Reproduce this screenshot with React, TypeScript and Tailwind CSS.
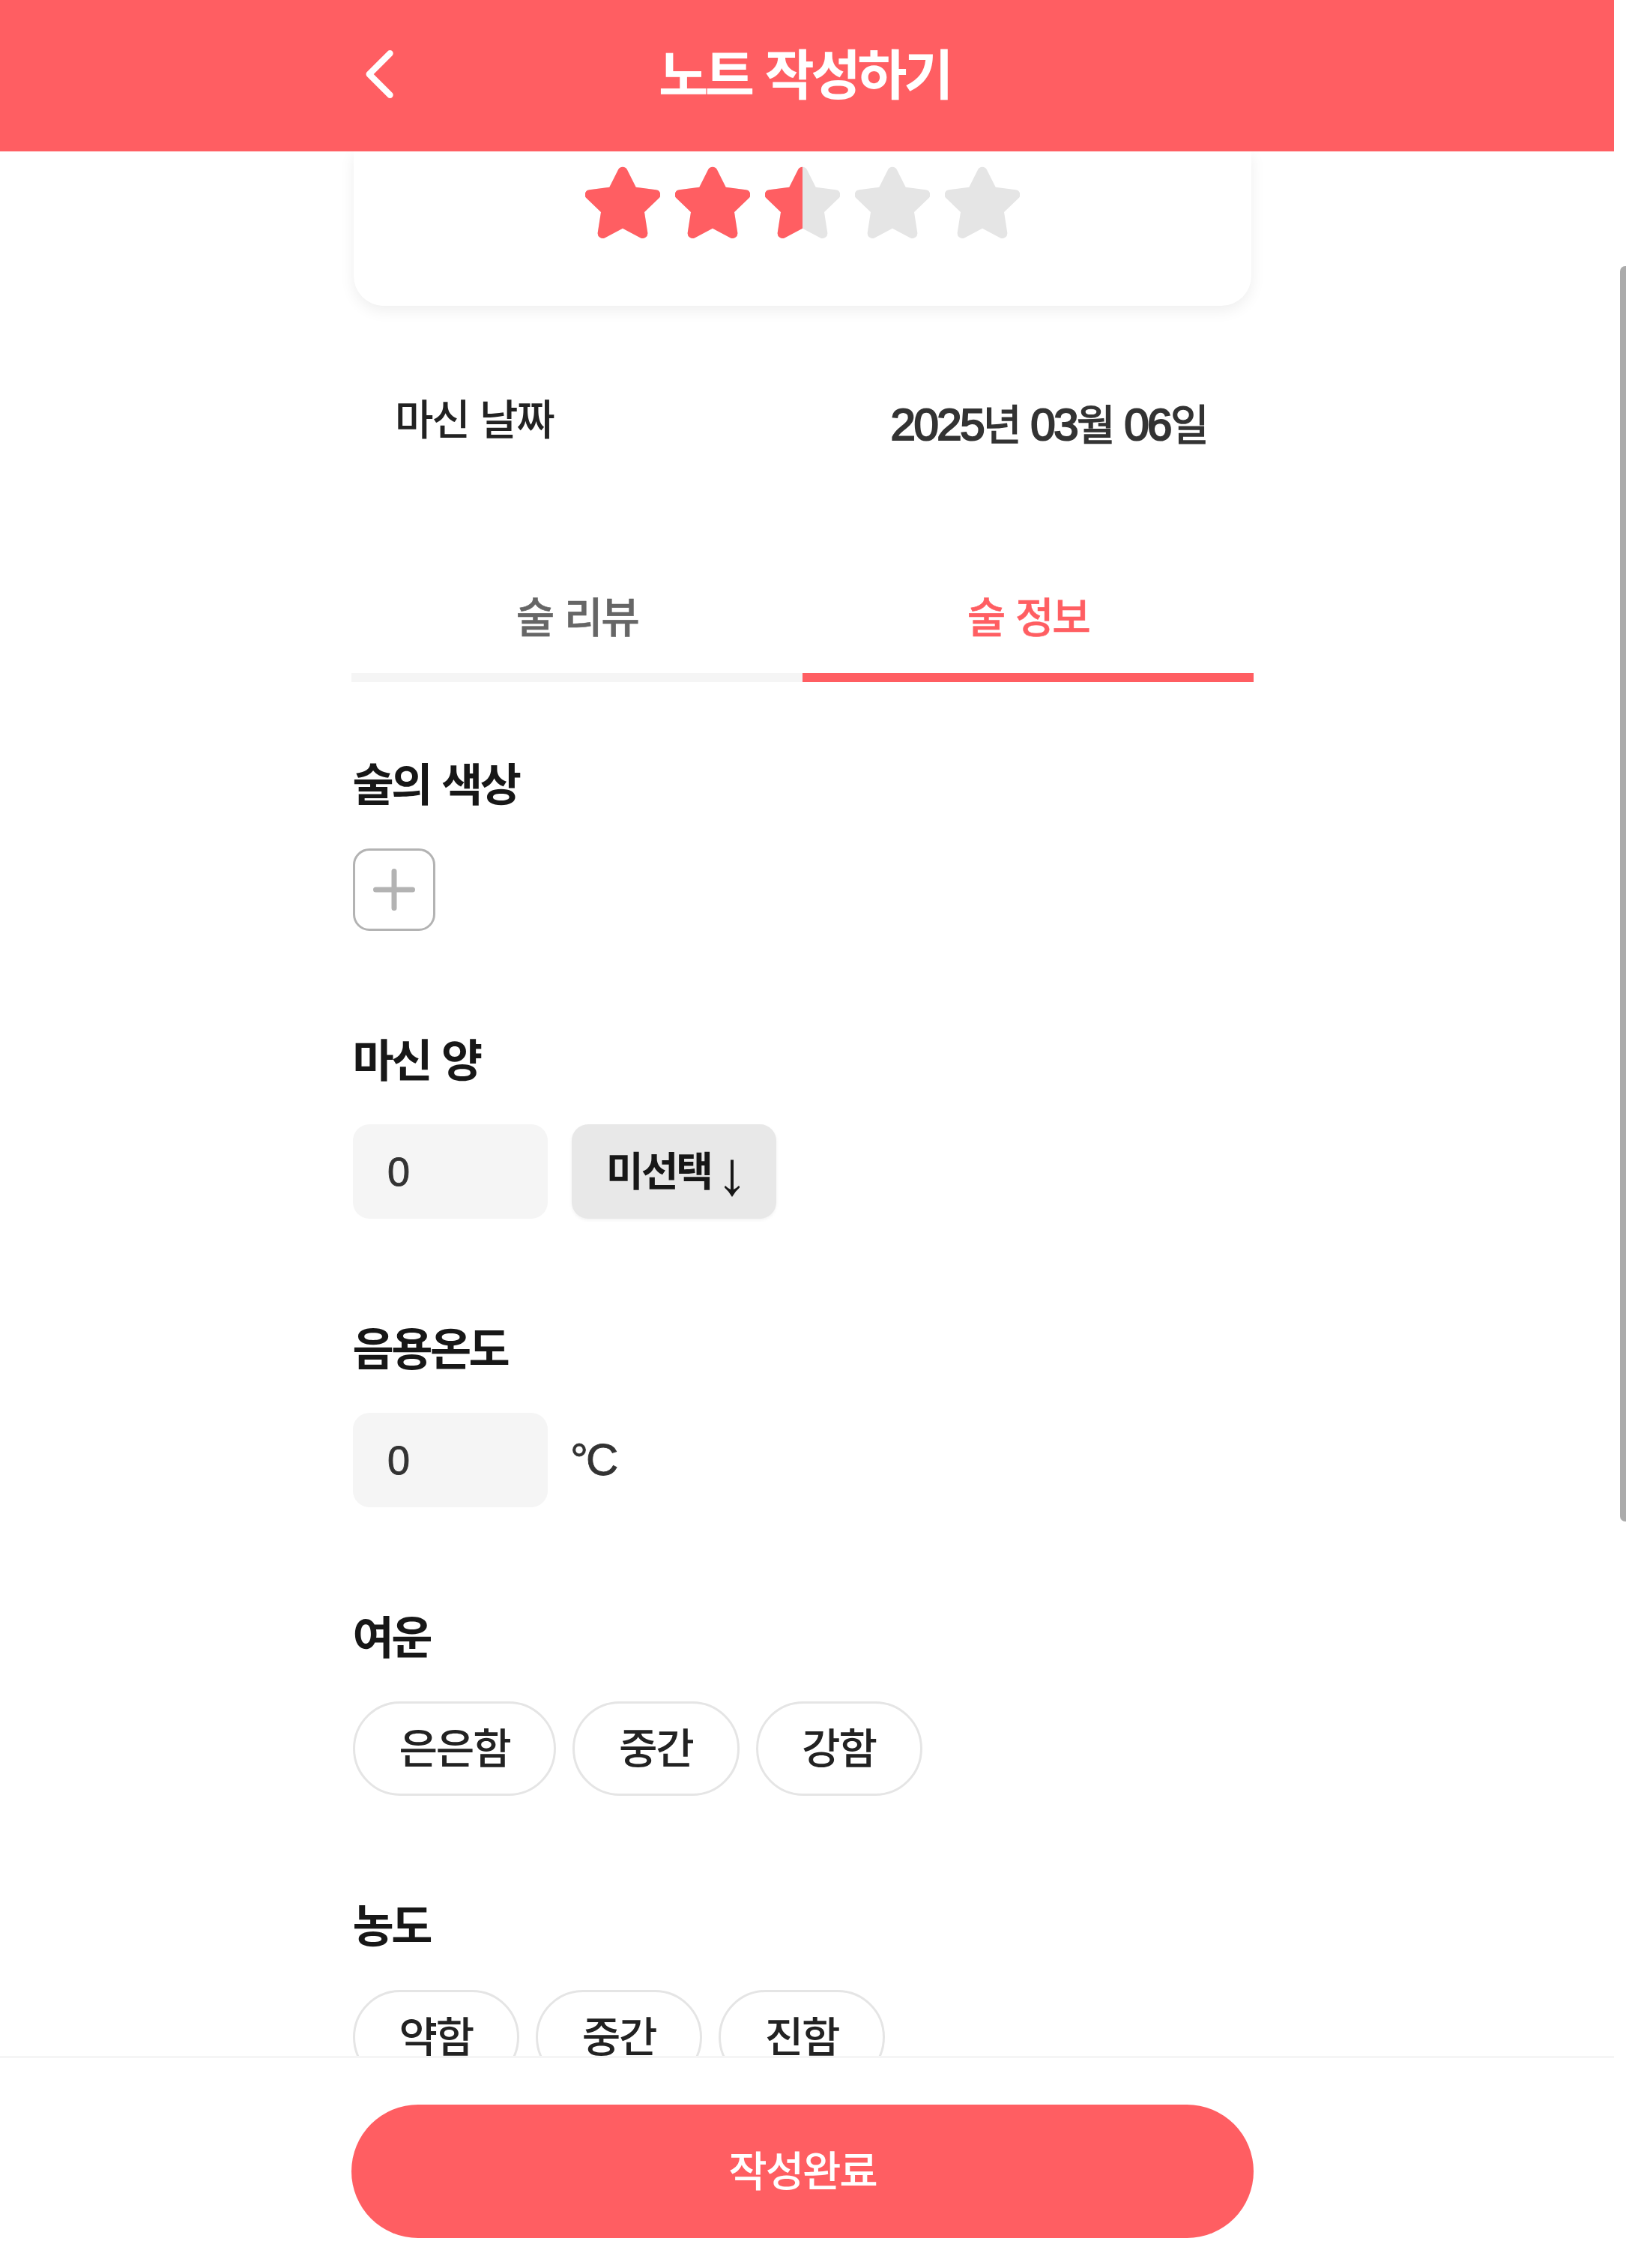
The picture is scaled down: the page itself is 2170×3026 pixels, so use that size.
import React, { useState } from "react";

const STAR_PATH =
  "M44 4.500A6.700 6.700 0 0 1 56 4.500L67.700 27.700L94.500 31.200A6.500 6.500 0 0 1 98 42.700L79 61L83.300 88.500A6.700 6.700 0 0 1 73.500 95.200L50 82.700L26.500 95.200A6.700 6.700 0 0 1 16.700 88.500L21 61L2 42.700A6.500 6.500 0 0 1 5.500 31.200L32.300 27.700Z";

type StarProps = {
  fill: number;
  id: number;
};

const Star: React.FC<StarProps> = ({ fill, id }) => (
  <svg width="100" height="97" viewBox="0 0 100 97">
    <clipPath id={`star-${id}`}>
      <rect x="0" y="0" width={fill * 100} height="97" />
    </clipPath>
    <path d={STAR_PATH} fill="#e5e5e5" />
    <path d={STAR_PATH} fill="#ff5e62" clipPath={`url(#star-${id})`} />
  </svg>
);

const SectionTitle: React.FC<{ children: React.ReactNode }> = ({ children }) => (
  <h2 className="h-[72px] pl-[1.5px] text-[60px] leading-[66px] font-bold tracking-[-3.5px] [word-spacing:5px] text-[#171717]">
    {children}
  </h2>
);

type NumberFieldProps = {
  value: string;
  onChange: (value: string) => void;
};

const NumberField: React.FC<NumberFieldProps> = ({ value, onChange }) => (
  <input
    value={value}
    onChange={(e) => onChange(e.target.value)}
    className="h-[126px] w-[260px] rounded-[22px] bg-[#f5f5f5] px-[46px] font-['Liberation_Sans',sans-serif] text-[54px] text-[#333] [-webkit-text-stroke:0.9px_#333]"
  />
);

type ChipGroupProps = {
  options: string[];
  value: string;
  onChange: (value: string) => void;
};

const ChipGroup: React.FC<ChipGroupProps> = ({ options, value, onChange }) => (
  <div className="ml-0.5 flex gap-[22px]">
    {options.map((option) => (
      <button
        key={option}
        onClick={() => onChange(option)}
        className={
          "h-[126px] rounded-full border-[3px] pr-[59px] pb-2 pl-[58.5px] text-[56px] leading-[80px] font-medium tracking-[-2.2px] whitespace-nowrap " +
          (value === option ? "border-[#ff5e62] text-[#ff5e62]" : "border-[#e5e5e5] text-[#222]")
        }
      >
        {option}
      </button>
    ))}
  </div>
);

const App: React.FC = () => {
  const [tab, setTab] = useState("info");
  const [rating] = useState(2.5);
  const [amount, setAmount] = useState("0");
  const [temperature, setTemperature] = useState("0");
  const [aftertaste, setAftertaste] = useState("");
  const [density, setDensity] = useState("");

  const tabs = [
    { id: "review", label: "술 리뷰" },
    { id: "info", label: "술 정보" },
  ];

  return (
    <div className="relative flex h-[3026px] w-[2170px] flex-col overflow-hidden bg-white font-['Noto_Sans_CJK_KR',sans-serif]">
      <header className="z-10 h-[202px] w-[2154px] shrink-0 bg-[#ff5e62]">
        <div className="ml-[469px] grid h-[198px] w-[1204px] grid-cols-[1fr_auto_1fr] items-center text-white">
          <button className="ml-[19px] w-[38px]">
            <svg width="38" height="66" viewBox="0 0 38 66" fill="none" stroke="currentColor" strokeWidth="8.4" strokeLinecap="round" strokeLinejoin="round">
              <path d="M32.500 5.200L4.700 33L32.500 60.800" />
            </svg>
          </button>
          <h1 className="pb-2 pl-[5px] text-[72px] leading-[96px] font-bold tracking-[-4.4px] [word-spacing:6px]">노트 작성하기</h1>
        </div>
      </header>

      <main className="ml-[469px] h-[2541px] w-[1204px] shrink-0">
        <div className="mx-[3px] flex h-[206px] justify-center gap-[20px] rounded-b-[40px] bg-white pt-5 shadow-[0_6px_20px_rgba(0,0,0,0.07)]">
          {[0, 1, 2, 3, 4].map((i) => (
            <Star key={i} id={i} fill={Math.max(0, Math.min(1, rating - i))} />
          ))}
        </div>

        <div className="mt-[100px] flex h-[112px] justify-between px-[60px]">
          <span className="-ml-[2px] text-[56px] leading-[96px] font-medium tracking-[-2.2px] [word-spacing:4px] text-[#222]">마신 날짜</span>
          <span className="mr-[2px] pt-[11px] font-['Liberation_Sans','Noto_Sans_CJK_KR',sans-serif] text-[60px] leading-[96px] tracking-[-2.5px] text-[#333] [-webkit-text-stroke:2.2px_#333]">
            2025<span className="text-[56px] [-webkit-text-stroke:1.5px_#333]">년</span> 03
            <span className="text-[56px] [-webkit-text-stroke:1.5px_#333]">월</span> 06
            <span className="text-[56px] [-webkit-text-stroke:1.5px_#333]">일</span>
          </span>
        </div>

        <div className="mt-[132px] flex">
          {tabs.map((item) => (
            <button
              key={item.id}
              onClick={() => setTab(item.id)}
              className={
                "h-[158px] flex-1 border-b-[12px] pb-[11px] text-[56px] leading-[80px] font-medium tracking-[-2.4px] [word-spacing:5px] " +
                (tab === item.id
                  ? "border-[#ff5e62] text-[#ff5e62] [-webkit-text-stroke:0.5px_#ff5e62]"
                  : "border-[#f5f5f5] text-[#666] [-webkit-text-stroke:0.5px_#666]")
              }
            >
              {item.label}
            </button>
          ))}
        </div>

        <section className="mt-[100px]">
          <SectionTitle>술의 색상</SectionTitle>
          <button className="mt-[50px] ml-0.5 flex h-[110px] w-[110px] items-center justify-center rounded-[22px] border-[3px] border-[#b3b3b3] text-[#b3b3b3]">
            <svg width="56" height="56" viewBox="0 0 56 56" fill="none" stroke="currentColor" strokeWidth="7" strokeLinecap="round">
              <path d="M28 3.5V52.5M3.500 28H52.500" />
            </svg>
          </button>
        </section>

        <section className="mt-[136px]">
          <SectionTitle>마신 양</SectionTitle>
          <div className="mt-[50px] ml-0.5 flex gap-8">
            <NumberField value={amount} onChange={setAmount} />
            <button className="flex h-[126px] w-[273px] items-center rounded-[22px] bg-[#e8e8e8] pl-[46px] text-[54px] font-bold tracking-[-3px] whitespace-nowrap text-[#171717] shadow-[0_2px_4px_rgba(0,0,0,0.05)]">
              <span className="pb-[7px]">미선택</span>
              <svg className="mt-[17px] ml-[18px]" width="20" height="50" viewBox="0 0 20 50">
                <path d="M8 .5H12V40Q15.500 38.500 19 35L20.500 37Q14 42.500 10 50Q6 42.500 -.5 37L1 35Q4.500 38.500 8 40Z" fill="currentColor" />
              </svg>
            </button>
          </div>
        </section>

        <section className="mt-[137px]">
          <SectionTitle>음용온도</SectionTitle>
          <div className="mt-[50px] ml-0.5 flex items-center gap-[30px]">
            <NumberField value={temperature} onChange={setTemperature} />
            <span className="font-['Liberation_Sans',sans-serif] text-[60px] tracking-[-3px] text-[#333] [-webkit-text-stroke:0.9px_#333]">°C</span>
          </div>
        </section>

        <section className="mt-[137px]">
          <SectionTitle>여운</SectionTitle>
          <div className="mt-[50px]">
            <ChipGroup options={["은은함", "중간", "강함"]} value={aftertaste} onChange={setAftertaste} />
          </div>
        </section>

        <section className="mt-[137px]">
          <SectionTitle>농도</SectionTitle>
          <div className="mt-[50px]">
            <ChipGroup options={["약함", "중간", "진함"]} value={density} onChange={setDensity} />
          </div>
        </section>
      </main>

      <footer className="z-10 h-[283px] w-[2154px] shrink-0 border-t-[3px] border-[#f5f5f5] bg-white pt-[62px] pl-[469px]">
        <button className="h-[178px] w-[1204px] rounded-full bg-[#ff5e62] pb-2 text-[56px] font-medium tracking-[-2.2px] text-white">
          작성완료
        </button>
      </footer>

      {/* scrollbar thumb */}
      <div className="absolute top-[355px] right-0 h-[1675px] w-2 rounded-l-[7px] bg-[#ababab]" />
    </div>
  );
};

export default App;
